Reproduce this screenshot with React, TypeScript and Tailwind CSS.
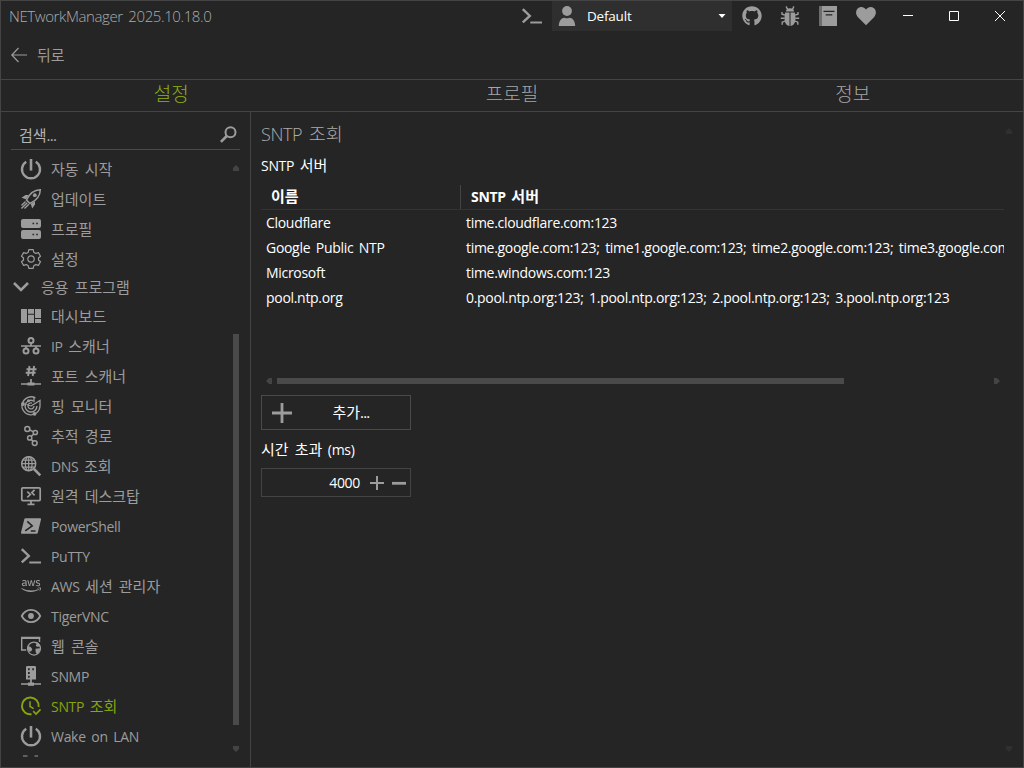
import type { ReactNode } from "react";
import { FaAws, FaGithub } from "react-icons/fa";

interface NavItem {
  label: string;
  icon: ReactNode;
  active?: boolean;
}

function Icon({ children }: { children: ReactNode }) {
  return (
    <svg
      viewBox="0 0 20 20"
      className="w-5 h-5 shrink-0 overflow-visible"
      fill="none"
      stroke="currentColor"
      strokeWidth="1.5"
    >
      {children}
    </svg>
  );
}

const PowerIcon = () => (
  <Icon>
    <path d="M10 0v11.6" strokeWidth="2.6" />
    <path d="M5.2 2.7A9 9 0 1 0 14.8 2.7" strokeWidth="2.4" />
  </Icon>
);

const RocketIcon = () => (
  <Icon>
    <path d="M19.3.7C13 .8 8.5 4.5 5.5 11l3.5 3.5C15.5 11.5 19.2 7 19.3.7Z" strokeWidth="1.5" />
    <circle cx="13.8" cy="6.2" r="1.9" fill="currentColor" stroke="none" />
    <path d="M.5 8.8 4.5 6h3.2L5 10.2ZM11.2 19.5l2.8-4v-3.2L9.8 15Z" fill="currentColor" stroke="none" />
    <path d="M4.5 12.5.5 16.5M6.2 13.8.4 19.6M7.8 15.2 3.5 19.5" strokeWidth="1.4" />
  </Icon>
);

const ServerIcon = () => (
  <Icon>
    <path
      fill="currentColor"
      stroke="none"
      fillRule="evenodd"
      d="M2 0h16a2 2 0 0 1 2 2v5a2 2 0 0 1-2 2H2a2 2 0 0 1-2-2V2a2 2 0 0 1 2-2Zm9.5 3.7v1.6h1.6V3.7Zm3.7 0v1.6h1.6V3.7ZM2 11h16a2 2 0 0 1 2 2v5a2 2 0 0 1-2 2H2a2 2 0 0 1-2-2v-5a2 2 0 0 1 2-2Zm9.5 3.7v1.6h1.6v-1.6Zm3.7 0v1.6h1.6v-1.6Z"
    />
  </Icon>
);

const GearIcon = () => (
  <Icon>
    <path
      strokeWidth="1.2"
      strokeLinejoin="round"
      d="M7.8.6h4.4l.6 2.7 1.9 1.1 2.7-.8 2.1 3.7-2 1.7v2l2 1.7-2.1 3.7-2.7-.8-1.9 1.1-.6 2.7H7.8l-.6-2.7-1.9-1.1-2.7.8-2.1-3.7 2-1.7V9l-2-1.7 2.1-3.7 2.7.8 1.9-1.1Z"
    />
    <circle cx="10" cy="10" r="3.2" strokeWidth="1.2" />
  </Icon>
);

const DashboardIcon = () => (
  <Icon>
    <path
      fill="currentColor"
      stroke="none"
      d="M0 3h6v14H0ZM7 3h6v4.7H7ZM7 8.7h6V17H7ZM14 3h6v9h-6ZM14 13h6v4h-6Z"
    />
  </Icon>
);

const NetworkIcon = () => (
  <Icon>
    <circle cx="10" cy="4.6" r="2.5" strokeWidth="2" />
    <path d="M10 7v3M0 10h20M5 10v3M15 10v3" strokeWidth="1.7" />
    <circle cx="5" cy="15" r="2.5" strokeWidth="2" />
    <circle cx="15" cy="15" r="2.5" strokeWidth="2" />
  </Icon>
);

const PortIcon = () => (
  <Icon>
    <path d="M8.5 0 7.1 10M13.1 0 11.7 10M5.5 3.2H15.500M4.700 6.700h9.900" strokeWidth="1.9" />
    <path d="M10 13v4M0 18h20" strokeWidth="1.700" />
    <path d="M6.500 16.500h7V19.500h-7Z" fill="currentColor" stroke="none" />
  </Icon>
);

const RadarIcon = () => (
  <Icon>
    <path d="M14.5 2A9 9 0 1 0 19 10V4.5L10 10" strokeWidth="1.3" />
    <path d="M12.5 4.8A5.9 5.9 0 1 0 15.9 10" strokeWidth="1.4" />
    <path d="M11 7.1A3 3 0 1 0 13 10M13 .8v5.5M5.5 8.5 10 10" strokeWidth="1.3" />
    <circle cx="2" cy="8" r="1.9" fill="currentColor" stroke="none" />
    <circle cx="13.5" cy="17.8" r="1.9" fill="currentColor" stroke="none" />
    <circle cx="7.5" cy="4.8" r="1.5" fill="currentColor" stroke="none" />
  </Icon>
);

const TraceIcon = () => (
  <Icon>
    <circle cx="6.3" cy="2.9" r="2.5" />
    <circle cx="14.3" cy="6.5" r="2.1" />
    <circle cx="8.7" cy="11.9" r="2.1" />
    <circle cx="13.7" cy="17.1" r="2.4" />
    <path d="m8.7 4 3.5 1.6M12.9 8 10 10.4M10.1 13.4l2 2" />
  </Icon>
);

const DnsIcon = () => (
  <Icon>
    <circle cx="7.7" cy="7.7" r="7" strokeWidth="1.5" />
    <ellipse cx="7.7" cy="7.7" rx="3.4" ry="7" strokeWidth="1.2" />
    <path d="M7.7.7v14M.7 7.7h14M1.7 4.2h12M1.7 11.2h12" strokeWidth="1.2" />
    <path d="m13 13 6.3 6.3" strokeWidth="2.5" />
  </Icon>
);

const RemoteIcon = () => (
  <Icon>
    <rect x=".8" y="1.8" width="18.4" height="12.8" rx="1" strokeWidth="1.7" />
    <path d="M6.5 18.3h7M10 15v3" strokeWidth="1.8" />
    <path d="m6.3 5.700 3 2.800-3 2.800M13.600 3.900l-2.800 2.700 2.800 2.700" strokeWidth="1.7" />
  </Icon>
);

const PowerShellIcon = () => (
  <Icon>
    <path
      d="M4.5 2.3H19a1 1 0 0 1 1 1.2l-3.2 13.2a1.3 1.3 0 0 1-1.2 1H1a1 1 0 0 1-1-1.2L3.3 3.3a1.3 1.3 0 0 1 1.2-1Z"
      fill="currentColor"
      stroke="none"
    />
    <path d="m6.3 5.3 4.9 4.6-7 5M9.8 15h4.7" className="stroke-[#252525]" strokeWidth="1.6" />
  </Icon>
);

const PromptIcon = () => (
  <Icon>
    <path d="M.8 3.1 7.8 10l-7 6.4" strokeWidth="2.4" />
    <path d="M8.3 16.5H20" strokeWidth="2" />
  </Icon>
);

const EyeIcon = () => (
  <Icon>
    <path d="M.8 10C2.8 5.9 6.2 3.9 10 3.9s7.2 2 9.2 6.1c-2 4.1-5.4 6.1-9.2 6.1S2.8 14.1.8 10Z" strokeWidth="1.8" />
    <circle cx="10" cy="10" r="2.9" fill="currentColor" stroke="none" />
  </Icon>
);

const WebConsoleIcon = () => (
  <Icon>
    <path d="M5.2 14H.7V1.5h17.8V6" strokeWidth="1.4" />
    <path d="M0 2h19.2" strokeWidth="2" />
    <circle cx="13" cy="12.6" r="6.5" strokeWidth="1.2" />
    <path
      d="m7 10.2 2.5.6 1.8 2.2-1 2.2-2.3.5-1.3-2.8ZM13.5 6.5l2 1.2-.7 2.2 1.5.8 3.2-.3-1.3-2.7-2.5-1.7ZM14.5 12.8l4.8-.5-.8 3.4-2.5 2.6-1.3-2Z"
      fill="currentColor"
      stroke="none"
    />
  </Icon>
);

const SnmpIcon = () => (
  <Icon>
    <path
      d="M6.3 0h7.4A1.3 1.3 0 0 1 15 1.3V13.5H5V1.3A1.3 1.3 0 0 1 6.3 0ZM7 2.3v2h1.7v-2ZM7 6v2h1.7V6ZM7 9.7v2h1.7v-2Zm4.3-7.4v2h1.6v-2Z"
      fill="currentColor"
      fillRule="evenodd"
      stroke="none"
    />
    <path d="M10 13v4M0 18h20" strokeWidth="1.7" />
    <path d="M7 16.5h6v3.3H7Z" fill="currentColor" stroke="none" />
  </Icon>
);

const ClockIcon = () => (
  <Icon>
    <path d="M10.5 18.2A8.4 8.4 0 1 1 17.6 11" strokeWidth="1.9" />
    <path d="M9 5.3v5.2l3.6 2.2" />
    <path d="m12.2 15.2 2.8 2.8 4.5-4.7" strokeWidth="1.7" />
  </Icon>
);

const BugIcon = () => (
  <Icon>
    <path
      d="M6 5.5a4 3.3 0 0 1 8 0ZM5.2 6.5h4.3V20C6.5 19.7 4.5 17 4.5 12.5c0-2.5.2-4 .7-6ZM10.5 6.5h4.3c.5 2 .7 3.5.7 6 0 4.5-2 7.2-5 7.5Z"
      fill="currentColor"
      stroke="none"
    />
    <path
      d="M7.8 3 6.5 1.7V.2M12.2 3l1.3-1.3V.2M4.8 9 2 8.3V6M15.2 9l2.8-.7V6M4.6 12.2H.8M15.4 12.2h3.8M5 15.2l-2.8 1v2.5M15 15.2l2.8 1v2.5"
      strokeWidth="1.4"
    />
  </Icon>
);

const BookIcon = () => (
  <Icon>
    <path d="M1 0h2.6v20H1Z" fill="currentColor" fillOpacity=".6" stroke="none" />
    <path
      d="M3.6 0H19v20H3.6ZM5.5 4.8v1.3h11V4.8Zm2.2 3.5v1.3h6.6V8.3Z"
      fill="currentColor"
      fillRule="evenodd"
      stroke="none"
    />
  </Icon>
);

const HeartIcon = () => (
  <Icon>
    <path
      d="M10 19.3 2 11.2C-.7 8.2-.3 4.3 2 2.2c2.4-2 6-1.7 8 1.3 2-3 5.6-3.3 8-1.3 2.3 2.1 2.7 6 0 9Z"
      fill="currentColor"
      stroke="none"
    />
  </Icon>
);

const UserIcon = () => (
  <Icon>
    <circle cx="10" cy="5" r="4.9" fill="currentColor" stroke="none" />
    <path d="M1.8 20c0-5 2.7-8.3 5.7-8.3 1.6.8 3.4.8 5 0 3 0 5.7 3.3 5.7 8.3Z" fill="currentColor" stroke="none" />
  </Icon>
);

const generalItems: NavItem[] = [
  { label: "자동 시작", icon: <PowerIcon /> },
  { label: "업데이트", icon: <RocketIcon /> },
  { label: "프로필", icon: <ServerIcon /> },
  { label: "설정", icon: <GearIcon /> },
];

const appItems: NavItem[] = [
  { label: "대시보드", icon: <DashboardIcon /> },
  { label: "IP 스캐너", icon: <NetworkIcon /> },
  { label: "포트 스캐너", icon: <PortIcon /> },
  { label: "핑 모니터", icon: <RadarIcon /> },
  { label: "추적 경로", icon: <TraceIcon /> },
  { label: "DNS 조회", icon: <DnsIcon /> },
  { label: "원격 데스크탑", icon: <RemoteIcon /> },
  { label: "PowerShell", icon: <PowerShellIcon /> },
  { label: "PuTTY", icon: <PromptIcon /> },
  { label: "AWS 세션 관리자", icon: <FaAws className="w-5 h-5 shrink-0" /> },
  { label: "TigerVNC", icon: <EyeIcon /> },
  { label: "웹 콘솔", icon: <WebConsoleIcon /> },
  { label: "SNMP", icon: <SnmpIcon /> },
  { label: "SNTP 조회", icon: <ClockIcon />, active: true },
  { label: "Wake on LAN", icon: <PowerIcon /> },
];

const servers = [
  { name: "Cloudflare", hosts: "time.cloudflare.com:123" },
  {
    name: "Google Public NTP",
    hosts:
      "time.google.com:123; time1.google.com:123; time2.google.com:123; time3.google.com:123; time4.google.com:123",
  },
  { name: "Microsoft", hosts: "time.windows.com:123" },
  {
    name: "pool.ntp.org",
    hosts: "0.pool.ntp.org:123; 1.pool.ntp.org:123; 2.pool.ntp.org:123; 3.pool.ntp.org:123",
  },
];

// Latin runs need a smaller size than Hangul to sit at the same optical width
function Label({ text, latin = "text-[14px] tracking-[-0.3px]" }: { text: string; latin?: string }) {
  return (
    <span className="whitespace-pre">
      {text.split(/([ -~]*[A-Za-z0-9][ -~]*)/).map((part, i) =>
        /[A-Za-z0-9]/.test(part) ? (
          <span key={i} className={latin}>
            {part}
          </span>
        ) : (
          part
        )
      )}
    </span>
  );
}

function NavRow({ item }: { item: NavItem }) {
  return (
    <div
      className={`flex h-[30px] shrink-0 items-center gap-2.5 pl-5 ${
        item.active ? "text-[#86a60b]" : "text-[#9c9c9c]"
      }`}
    >
      {item.icon}
      <Label text={item.label} />
    </div>
  );
}

export default function App() {
  return (
    <div className="flex h-[768px] w-[1024px] flex-col overflow-hidden border border-[#444444] bg-[#252525] font-['Open_Sans','Noto_Sans_CJK_KR',sans-serif] text-[15px] leading-5 text-[#9c9c9c] [word-spacing:2.2px]">
      <header className="flex h-[30px] shrink-0 items-center">
        <h1 className="w-[521px] pl-2 text-[15px] font-light tracking-[-0.4px] text-[#acacac]">
          NETworkManager 2025.10.18.0
        </h1>
        <div className="flex w-[30px] items-center">
          <PromptIcon />
        </div>
        <div className="flex h-full w-[180px] items-center bg-[#2f2f2f] pl-[5px] pr-1.5 text-white">
          <span className="text-[#9c9c9c]">
            <UserIcon />
          </span>
          <span className="ml-2.5 flex-1 text-[13.5px] tracking-[-0.2px]">Default</span>
          <svg viewBox="0 0 8 4" className="h-1 w-2" fill="currentColor">
            <path d="M.5 0h7L4 4Z" />
          </svg>
        </div>
        <div className="flex items-center gap-[18px] pl-2.5">
          <FaGithub className="h-5 w-5" />
          <BugIcon />
          <BookIcon />
          <HeartIcon />
        </div>
        <div className="ml-[27px] flex items-center gap-[36px] text-white">
          <svg viewBox="0 0 10 10" className="h-2.5 w-2.5" stroke="currentColor">
            <path d="M0 4.5h10" />
          </svg>
          <svg viewBox="0 0 10 10" className="h-2.5 w-2.5" stroke="currentColor" fill="none">
            <path d="M.5.5h9v9h-9Z" />
          </svg>
          <svg viewBox="0 0 10 10" className="h-2.5 w-2.5" stroke="currentColor">
            <path d="m0 0 10 10M10 0 0 10" />
          </svg>
        </div>
      </header>

      <div className="flex h-[49px] shrink-0 items-center border-b border-[#444444] pl-2.5">
        <svg viewBox="0 0 16 16" className="h-4 w-4" fill="none" stroke="currentColor" strokeWidth="1.2">
          <path d="M7.5 1 .8 8l6.7 7M.8 8H16" />
        </svg>
        <span className="ml-2.5">뒤로</span>
      </div>

      <nav className="grid h-8 shrink-0 grid-cols-3 border-b border-[#444444] pb-0.5 text-center text-[19px] font-light leading-7 text-[#a6a6a6]">
        <span className="text-[#8fb10c]">설정</span>
        <span>프로필</span>
        <span>정보</span>
      </nav>

      <div className="flex min-h-0 flex-1">
        <aside className="flex w-[250px] shrink-0 flex-col border-r border-[#444444] pb-[9px]">
          <div className="ml-2.5 flex h-[38px] w-[229px] shrink-0 items-center justify-between border-b border-[#4a4a4a] pl-2 pr-[3px] pt-2 text-[#b4b4b4]">
            <span>
              검색<span className="tracking-[-0.8px]">...</span>
            </span>
            <svg viewBox="0 0 17 17" className="h-[17px] w-[17px] text-[#9c9c9c]" fill="none" stroke="currentColor">
              <circle cx="10.5" cy="6.3" r="5" strokeWidth="2" />
              <path d="M7 9.8.9 15.9" strokeWidth="2.7" />
            </svg>
          </div>
          <div className="flex min-h-0 flex-1">
            <div className="flex w-[232px] flex-col overflow-hidden pt-1">
              {generalItems.map((item) => (
                <NavRow key={item.label} item={item} />
              ))}
              <div className="flex h-[27px] shrink-0 items-center gap-3 pb-0.5 pl-3">
                <svg viewBox="0 0 16 10" className="h-2.5 w-4" fill="none" stroke="currentColor" strokeWidth="2.6">
                  <path d="m1 1 7 7 7-7" />
                </svg>
                응용 프로그램
              </div>
              {appItems.map((item) => (
                <NavRow key={item.label} item={item} />
              ))}
              {/* next entry, cut off by the bottom edge */}
              <svg viewBox="0 0 20 2" className="ml-5 mt-1 h-0.5 w-5 shrink-0" fill="currentColor">
                <path d="M2 .5h4.500v1H2ZM13.500.5H17v1h-3.500Z" />
              </svg>
            </div>
            <div className="flex w-1.5 flex-col text-[#444444]">
              <svg viewBox="0 0 6 6" className="mt-[15px] h-1.5 w-1.5 shrink-0" fill="currentColor">
                <path d="M0 6V3l3-3 3 3v3Z" />
              </svg>
              <div className="mt-[163px] h-[391px] w-1.5 shrink-0 bg-[#4a4a4a]" />
              <svg viewBox="0 0 6 6" className="mt-[21px] h-1.5 w-1.5 shrink-0" fill="currentColor">
                <path d="M0 0h6v3L3 6 0 3Z" />
              </svg>
            </div>
          </div>
        </aside>

        <main className="flex min-w-0 flex-1 flex-col pl-2.5 text-white">
          <h2 className="mt-[11px] h-[22px] text-[18.5px] font-light leading-[22px] text-[#acacac]">
            <Label text="SNTP 조회" latin="text-[18px] tracking-[-0.4px]" />
          </h2>
          <div className="mt-2.5 h-5">
            <Label text="SNTP 서버" />
          </div>

          <div className="mt-2.5 w-[743px] overflow-hidden">
            <div className="flex h-[25px] border-b border-[#333333] font-bold">
              <div className="w-[200px] border-r border-[#444444] pl-2.5 leading-[22px]">이름</div>
              <div className="pl-2.5 leading-[22px]">
                <Label text="SNTP 서버" />
              </div>
            </div>
            <div className="h-[168px] text-[14px] tracking-[-0.3px]">
              {servers.map((server) => (
                <div key={server.name} className="flex h-[25px] items-center whitespace-nowrap">
                  <span className="w-[200px] shrink-0 pl-[5px]">{server.name}</span>
                  <span className="pl-[5px]">{server.hosts}</span>
                </div>
              ))}
            </div>
          </div>

          <div className="flex h-1.5 w-[744px] items-center pl-[5px] text-[#444444]">
            <svg viewBox="0 0 6 6" className="h-1.5 w-1.5" fill="currentColor">
              <path d="M6 0H3L0 3l3 3h3Z" />
            </svg>
            <div className="ml-[5px] h-1.5 w-[567px] bg-[#4a4a4a]" />
            <svg viewBox="0 0 6 6" className="ml-[150px] h-1.5 w-1.5" fill="currentColor">
              <path d="M0 0h3l3 3-3 3H0Z" />
            </svg>
          </div>

          <button className="mt-[11px] flex h-[35px] w-[150px] items-center border border-[#4a4a4a] pl-2.5">
            <svg viewBox="0 0 20 20" className="h-5 w-5 text-[#9c9c9c]" stroke="currentColor" strokeWidth="2.8">
              <path d="M10 0v20M0 10h20" />
            </svg>
            <span className="flex-1 pb-0.5 text-center">
              추가<span className="tracking-[-0.8px]">...</span>
            </span>
          </button>

          <div className="mt-[9px] h-5">
            <Label text="시간 초과 (ms)" />
          </div>

          <div className="mt-[9px] flex h-[29px] w-[150px] items-center justify-end border border-[#444444] pr-1 text-[14px] tracking-[-0.3px]">
            <span>4000</span>
            <svg viewBox="0 0 14 14" className="ml-2.5 h-3.5 w-3.5 text-[#9c9c9c]" stroke="currentColor" strokeWidth="2">
              <path d="M7 0v14M0 7h14" />
            </svg>
            <svg viewBox="0 0 14 14" className="ml-2 h-3.5 w-3.5 text-[#9c9c9c]" stroke="currentColor" strokeWidth="2.8">
              <path d="M0 7.3h14" />
            </svg>
          </div>
        </main>

        <div className="flex w-[17px] shrink-0 flex-col justify-between pb-[15px] pt-4 text-[#303030]">
          <svg viewBox="0 0 6 6" className="h-1.5 w-1.5" fill="currentColor">
            <path d="M0 6V3l3-3 3 3v3Z" />
          </svg>
          <svg viewBox="0 0 6 6" className="h-1.5 w-1.5" fill="currentColor">
            <path d="M0 0h6v3L3 6 0 3Z" />
          </svg>
        </div>
      </div>
    </div>
  );
}
